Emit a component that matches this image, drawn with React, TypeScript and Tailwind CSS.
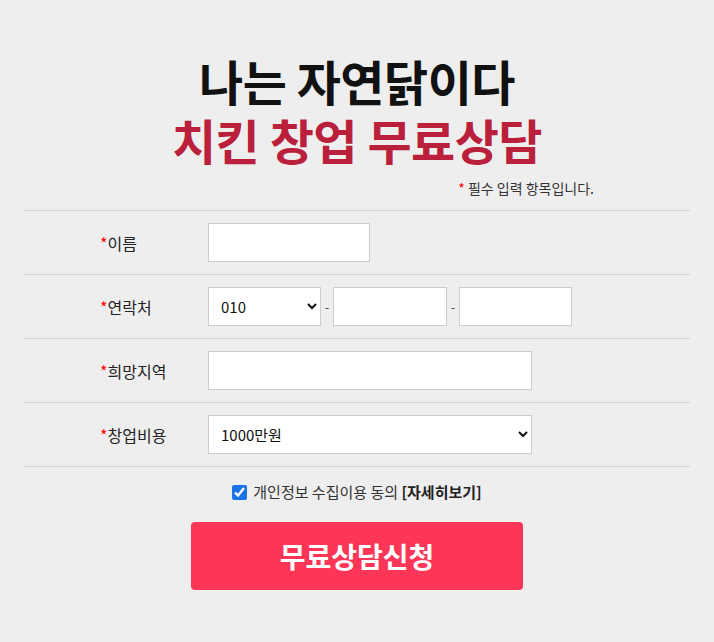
import { useState } from "react";

const FONT = { fontFamily: '"Noto Sans CJK KR", "Noto Sans", sans-serif' };

function Label({ children }: { children: string }) {
  return (
    <div className="w-[184px] shrink-0 pl-[76px] text-[16px] text-[#222]">
      <span className="text-[#ff0000]">*</span>
      {children}
    </div>
  );
}

function Row({ label, children }: { label: string; children: React.ReactNode }) {
  return (
    <div className="flex h-[64px] items-center border-b border-[#d5d5d5]">
      <Label>{label}</Label>
      <div className="flex items-center">{children}</div>
    </div>
  );
}

const inputCls =
  "h-[39px] border border-[#cccccc] bg-white px-2 text-[15px] outline-none";

export default function App() {
  const [agree, setAgree] = useState(true);
  return (
    <div className="min-h-[642px] bg-[#eeeeee] px-6 pt-[51px]" style={FONT}>
      <h1 className="flex flex-col items-center text-[48px] font-bold tracking-[-0.5px]">
        <div className="h-[59px] leading-[59px] text-[#111]">나는 자연닭이다</div>
        <div className="h-[59px] leading-[59px] text-[#ba1f3b]">치킨 창업 무료상담</div>
      </h1>

      <p className="mt-[9px] pr-[96px] text-right text-[14px] leading-[20px] text-[#333]">
        <span className="text-[#ff0000]">*</span> 필수 입력 항목입니다.
      </p>

      <div className="mt-[12px] border-t border-[#d5d5d5]">
        <Row label="이름">
          <input className={`${inputCls} w-[162px]`} />
        </Row>
        <Row label="연락처">
          <select className={`${inputCls} w-[113px] text-[#111]`} defaultValue="010">
            <option>010</option>
            <option>011</option>
            <option>016</option>
          </select>
          <span className="w-[12px] text-center text-[13px] text-[#555]">-</span>
          <input className={`${inputCls} w-[114px]`} />
          <span className="w-[12px] text-center text-[13px] text-[#555]">-</span>
          <input className={`${inputCls} w-[113px]`} />
        </Row>
        <Row label="희망지역">
          <input className={`${inputCls} w-[324px]`} />
        </Row>
        <Row label="창업비용">
          <select className={`${inputCls} w-[324px] text-[#111]`} defaultValue="1000만원">
            <option>1000만원</option>
            <option>2000만원</option>
            <option>3000만원</option>
          </select>
        </Row>
      </div>

      <label className="mt-[14px] flex items-center justify-center gap-[6px] text-[15px] text-[#333]">
        <input
          type="checkbox"
          checked={agree}
          onChange={(e) => setAgree(e.target.checked)}
          className="h-[15px] w-[15px] accent-[#1a73e8]"
        />
        <span>
          개인정보 수집이용 동의 <b className="font-bold text-[#222]">[자세히보기]</b>
        </span>
      </label>

      <div className="mt-[18px] flex justify-center">
        <button className="h-[68px] w-[332px] rounded-[4px] bg-[#fd3657] text-[28px] font-bold text-white">
          무료상담신청
        </button>
      </div>
    </div>
  );
}
